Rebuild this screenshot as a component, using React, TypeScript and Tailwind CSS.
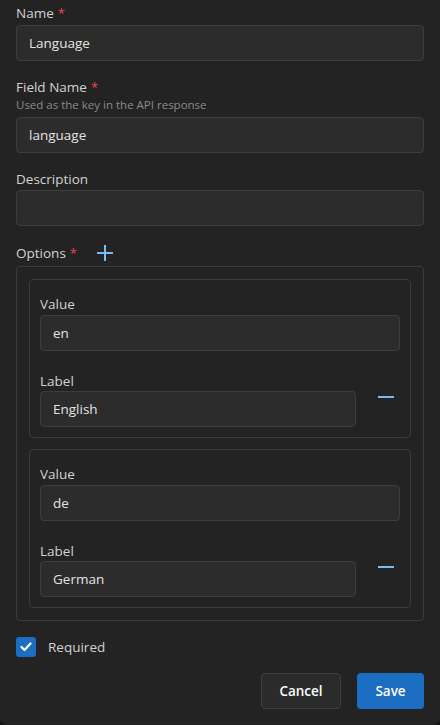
import React from "react";

const font = { fontFamily: '"Open Sans", "Noto Sans", sans-serif' };

function Req() {
  return <span className="ml-[4px] text-[13px] text-[#e5484d]">*</span>;
}

function Input({ value = "", className = "" }: { value?: string; className?: string }) {
  return (
    <div
      className={`h-[36px] rounded-[4px] border border-[#3d3d3d] bg-[#2c2c2c] px-[12px] flex items-center text-[13.5px] text-[#e3e3e3] ${className}`}
    >
      {value}
    </div>
  );
}

function Minus() {
  return (
    <button className="w-[28px] h-[16px] mt-[18px] flex items-center justify-center">
      <svg width="16" height="16" viewBox="0 0 16 16">
        <path d="M0 8h16" stroke="#78bbf5" strokeWidth="2" />
      </svg>
    </button>
  );
}

function OptionCard({ value, label }: { value: string; label: string }) {
  return (
    <div className="rounded-[4px] border border-[#3b3b3b] px-[10px] pt-[14px] pb-[10px]">
      <div className="text-[13.5px] leading-[20px] text-[#d2d2d2]">Value</div>
      <Input value={value} className="mt-[1px]" />
      <div className="mt-[20px] flex gap-[16px]">
        <div className="flex-1">
          <div className="text-[13.5px] leading-[20px] text-[#d2d2d2]">Label</div>
          <Input value={label} />
        </div>
        <Minus />
      </div>
    </div>
  );
}

export default function App() {
  return (
    <div className="w-[440px] h-[725px] bg-[#141414]" style={font}>
      <div className="h-full bg-[#232323] rounded-b-[7px] px-4 pt-[3px] pb-4 flex flex-col">
        <div className="text-[13.5px] leading-[20px] text-[#d2d2d2]">
          Name<Req />
        </div>
        <Input value="Language" className="mt-[2px]" />

        <div className="mt-4 text-[13.5px] leading-[20px] text-[#d2d2d2]">
          Field Name<Req />
        </div>
        <div className="text-[11.5px] leading-[15px] text-[#8a8a8a]">Used as the key in the API response</div>
        <Input value="language" className="mt-[5px]" />

        <div className="mt-4 text-[13.5px] leading-[20px] text-[#d2d2d2]">Description</div>
        <Input className="mt-[1px]" />

        <div className="mt-[17px] flex items-center text-[13.5px] leading-[20px] text-[#d2d2d2]">
          <span>
            Options<Req />
          </span>
          <button className="ml-[20px] w-[16px] h-[16px]">
            <svg width="16" height="16" viewBox="0 0 16 16">
              <path d="M0 8h16M8 0v16" stroke="#78bbf5" strokeWidth="2" />
            </svg>
          </button>
        </div>

        <div className="mt-[3px] rounded-[4px] border border-[#3b3b3b] px-3 pt-3 pb-[12px] flex flex-col gap-[10px]">
          <OptionCard value="en" label="English" />
          <div className="pt-[1px]">
            <OptionCard value="de" label="German" />
          </div>
        </div>

        <label className="mt-4 flex items-center gap-3">
          <span className="w-[20px] h-[20px] rounded-[3px] bg-[#1b6ec2] flex items-center justify-center">
            <svg width="12" height="10" viewBox="0 0 12 10">
              <path d="M1.5 5l3 3 6-6.5" fill="none" stroke="white" strokeWidth="2.2" strokeLinecap="round" strokeLinejoin="round" />
            </svg>
          </span>
          <span className="text-[13.5px] text-[#d2d2d2]">Required</span>
        </label>

        <div className="mt-4 flex justify-end gap-4">
          <button className="w-[80px] h-[36px] rounded-[4px] border border-[#3d3d3d] bg-[#2b2b2b] text-[13.5px] font-semibold text-white">
            Cancel
          </button>
          <button className="w-[67px] h-[36px] rounded-[4px] bg-[#1b6ec2] text-[13.5px] font-semibold text-white">
            Save
          </button>
        </div>
      </div>
    </div>
  );
}
